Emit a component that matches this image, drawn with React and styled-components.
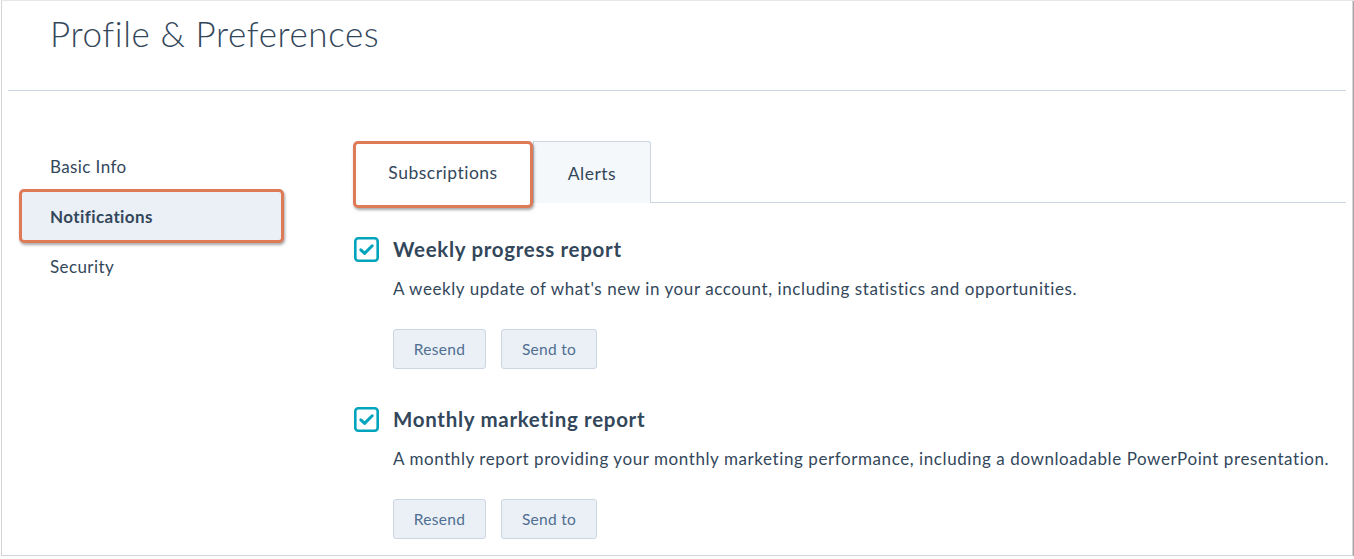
import React from "react";
import styled, { createGlobalStyle } from "styled-components";

const GlobalStyle = createGlobalStyle`
  html, body {
    margin: 0;
    padding: 0;
    background: #ffffff;
  }
  body {
    font-family: "Lato", "Open Sans", sans-serif;
    color: #33475b;
  }
  * {
    box-sizing: border-box;
  }
`;

const Frame = styled.div`
  margin-left: 1px;
  width: 1352px;
  height: 556px;
  border: 1px solid #d4d4d4;
  border-top-color: #e6e6e6;
  box-shadow: 1px 1px 1px rgba(0, 0, 0, 0.35);
  background: #ffffff;
  overflow: hidden;
`;

const Header = styled.header`
  height: 90px;
  margin: 0 6px;
  padding: 15px 0 0 42px;
  border-bottom: 1px solid #cbd6e2;
`;

const Title = styled.h1`
  margin: 0;
  font: 300 35px/35px "Lato", sans-serif;
  letter-spacing: 0.6px;
  color: #33475b;
`;

const Body = styled.div`
  display: flex;
  padding-top: 50px;
`;

const Sidebar = styled.nav`
  display: flex;
  flex-direction: column;
  width: 265px;
  margin-left: 17px;
`;

const NavItem = styled.div`
  display: flex;
  align-items: center;
  height: ${(p) => (p.active ? "54px" : "50px")};
  margin: ${(p) => (p.active ? "-2px 0" : "0")};
  padding-left: ${(p) => (p.active ? "28px" : "31px")};
  font-size: 17px;
  letter-spacing: 0.4px;
  font-weight: ${(p) => (p.active ? 700 : 400)};
  color: #33475b;
  background: ${(p) => (p.active ? "#eaf0f6" : "transparent")};
  border: ${(p) => (p.active ? "3px solid #df7a57" : "none")};
  border-radius: 5px;
  box-shadow: ${(p) => (p.active ? "1px 2px 3px rgba(0, 0, 0, 0.35)" : "none")};
`;

const Content = styled.main`
  flex: 1;
  margin-left: 69px;
  margin-right: 6px;
`;

const TabRow = styled.div`
  display: flex;
  align-items: flex-start;
  height: 62px;
  border-bottom: 1px solid #cbd6e2;
`;

const Tab = styled.div`
  display: flex;
  align-items: center;
  justify-content: center;
  font-size: 17.5px;
  letter-spacing: 0.5px;
  color: #33475b;
  width: ${(p) => (p.active ? "180px" : "118px")};
  height: ${(p) => (p.active ? "67px" : "62px")};
  background: ${(p) => (p.active ? "#ffffff" : "#f5f8fa")};
  border: ${(p) => (p.active ? "3px solid #df7a57" : "1px solid #cbd6e2")};
  border-bottom: ${(p) => (p.active ? "3px solid #df7a57" : "none")};
  border-radius: ${(p) => (p.active ? "5px" : "0 3px 0 0")};
  box-shadow: ${(p) => (p.active ? "1px 2px 3px rgba(0, 0, 0, 0.35)" : "none")};
  padding: ${(p) => (p.active ? "0 0 4px" : "1px 0 0")};
  position: relative;
  z-index: ${(p) => (p.active ? 1 : 0)};
`;

const ItemList = styled.div`
  display: flex;
  flex-direction: column;
  gap: 37px;
  padding-top: 33px;
`;

const Item = styled.div`
  display: flex;
`;

const CheckWrap = styled.div`
  width: 40px;
  padding-left: 1px;
  padding-top: 1px;
`;

const ItemBody = styled.div`
  display: flex;
  flex-direction: column;
`;

const ItemTitle = styled.h3`
  margin: 0;
  font: 700 20.5px/26px "Lato", sans-serif;
  letter-spacing: 0.7px;
  color: #33475b;
`;

const ItemDesc = styled.p`
  margin: 15px 0 0;
  font: 400 17px/24px "Lato", sans-serif;
  color: #33475b;
  letter-spacing: 0.58px;
`;

const Buttons = styled.div`
  display: flex;
  gap: 15px;
  margin-top: 28px;
`;

const Button = styled.button`
  height: 40px;
  min-width: ${(p) => p.w}px;
  padding: 0 18px 1px;
  font: 400 15.5px "Lato", sans-serif;
  letter-spacing: 0.3px;
  color: #506e91;
  background: #eaf0f6;
  border: 1px solid #cbd6e2;
  border-radius: 3px;
`;

const CheckIcon = () => (
  <svg width="25" height="25" viewBox="0 0 25 25">
    <rect x="1.3" y="1.3" width="22.4" height="22.4" rx="3" fill="none" stroke="#00a4bd" strokeWidth="2.6" />
    <path d="M6.8 12.8 L10.6 16.4 L18.2 8.8" fill="none" stroke="#00a4bd" strokeWidth="3" strokeLinecap="round" strokeLinejoin="round" />
  </svg>
);

const reports = [
  {
    title: "Weekly progress report",
    desc: "A weekly update of what's new in your account, including statistics and opportunities.",
  },
  {
    title: "Monthly marketing report",
    desc: "A monthly report providing your monthly marketing performance, including a downloadable PowerPoint presentation.",
  },
];

const App = () => {
  return (
    <>
      <GlobalStyle />
      <Frame>
        <Header>
          <Title>Profile &amp; Preferences</Title>
        </Header>
        <Body>
          <Sidebar>
            <NavItem>Basic Info</NavItem>
            <NavItem active>Notifications</NavItem>
            <NavItem>Security</NavItem>
          </Sidebar>
          <Content>
            <TabRow>
              <Tab active>Subscriptions</Tab>
              <Tab>Alerts</Tab>
            </TabRow>
            <ItemList>
              {reports.map((r) => (
                <Item key={r.title}>
                  <CheckWrap>
                    <CheckIcon />
                  </CheckWrap>
                  <ItemBody>
                    <ItemTitle>{r.title}</ItemTitle>
                    <ItemDesc>{r.desc}</ItemDesc>
                    <Buttons>
                      <Button w={93}>Resend</Button>
                      <Button w={96}>Send to</Button>
                    </Buttons>
                  </ItemBody>
                </Item>
              ))}
            </ItemList>
          </Content>
        </Body>
      </Frame>
    </>
  );
};

export default App;
